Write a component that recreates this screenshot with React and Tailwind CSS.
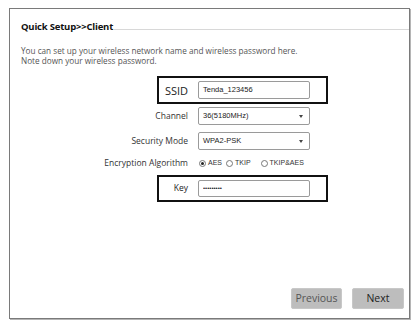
import React from 'react';

const labelFont = { fontFamily: '"Open Sans", "Noto Sans", sans-serif' };
const fieldFont = { fontFamily: '"Liberation Sans", Arial, sans-serif' };

const Field = ({ children, height = 'h-[18px]' }) => (
  <div
    className={`w-[112px] ${height} border border-[#9a9a9a] rounded-[2px] bg-white flex items-center pl-[4px] pr-[6px] text-[7.5px] text-[#222]`}
    style={fieldFont}
  >
    {children}
  </div>
);

const Select = ({ value }) => (
  <Field>
    <span className="flex-1">{value}</span>
    <svg width="4" height="3" viewBox="0 0 4 3">
      <path d="M0 0 L4 0 L2 3 Z" fill="#444" />
    </svg>
  </Field>
);

const Radio = ({ checked, label }) => (
  <label className="flex items-center gap-[2px]">
    <span className="w-[7px] h-[7px] rounded-full border border-[#777] flex items-center justify-center bg-white">
      {checked && <span className="w-[3px] h-[3px] rounded-full bg-[#222]" />}
    </span>
    <span className="text-[7px] text-[#333]" style={fieldFont}>{label}</span>
  </label>
);

const Row = ({ label, children, className = '' }) => (
  <div className={`flex items-center ${className}`}>
    <div className="w-[178px] text-right text-[8.5px] text-[#333] leading-none" style={labelFont}>{label}</div>
    <div className="ml-[10px]">{children}</div>
  </div>
);

const BoxedRow = ({ label, labelClass, children, className = '' }) => (
  <div className={`flex ${className}`}>
    <div className="w-[147px]" />
    <div className="flex items-center border-2 border-[#111] py-[3px] pr-[16px]">
      <div className={`w-[29px] text-right text-[#222] leading-none ${labelClass}`} style={labelFont}>{label}</div>
      <div className="ml-[10px]">{children}</div>
    </div>
  </div>
);

const App = () => {
  return (
    <div className="w-[416px] h-[328px] bg-white relative overflow-hidden">
      <div className="ml-[9px] mt-[8px] w-[401px] h-[311px] border border-[#7a7a7a] shadow-[1px_1px_0_#b5b5b5] flex flex-col">
        {/* Title */}
        <div className="flex items-end pt-[12px] pl-[11px]">
          <span className="text-[9.5px] font-bold leading-[12px] tracking-[-0.2px] text-[#111]" style={labelFont}>
            Quick Setup&gt;&gt;Client
          </span>
          <div className="flex-1 border-b border-[#d8d8d8] mb-[3px] ml-[1px]" />
        </div>

        {/* Description */}
        <div className="mt-[13px] pl-[11px] text-[8.2px] leading-[10px] text-[#555]" style={labelFont}>
          <p>You can set up your wireless network name and wireless password here.</p>
          <p>Note down your wireless password.</p>
        </div>

        {/* Form */}
        <BoxedRow label="SSID" labelClass="text-[11px]" className="mt-[10px]">
          <Field>Tenda_123456</Field>
        </BoxedRow>

        <Row label="Channel" className="mt-[3px]">
          <Select value="36(5180MHz)" />
        </Row>

        <Row label="Security Mode" className="mt-[7px]">
          <Select value="WPA2-PSK" />
        </Row>

        <Row label="Encryption Algorithm" className="mt-[7px] h-[12px]">
          <div className="flex items-center gap-[4px] ml-[1px]">
            <Radio checked label="AES" />
            <Radio label="TKIP" />
            <span className="w-[2px]" />
            <Radio label="TKIP&AES" />
          </div>
        </Row>

        <BoxedRow label="Key" labelClass="text-[8.5px]" className="mt-[6px]">
          <Field height="h-[17px]">
            <input
              type="password"
              readOnly
              value="123456789"
              className="w-full bg-transparent outline-none text-[6px] text-[#222]"
            />
          </Field>
        </BoxedRow>

        {/* Buttons */}
        <div className="mt-auto flex justify-end gap-[10px] pr-[5px] pb-[9px]">
          <button
            className="w-[51px] h-[21px] rounded-[2px] bg-[#bdbdbd] border border-[#c8c8c8] text-[10.5px] text-[#555]"
            style={labelFont}
          >
            Previous
          </button>
          <button
            className="w-[52px] h-[21px] rounded-[2px] bg-[#bdbdbd] border border-[#c8c8c8] text-[10.5px] text-[#222]"
            style={labelFont}
          >
            Next
          </button>
        </div>
      </div>
    </div>
  );
};

export default App;
